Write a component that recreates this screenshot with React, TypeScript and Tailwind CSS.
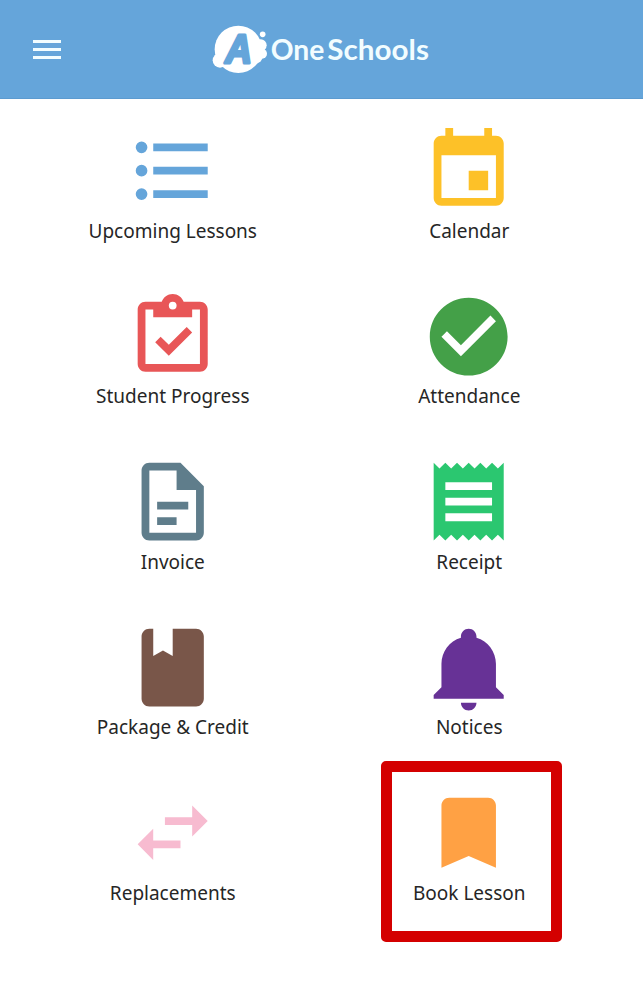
const menuItems = [
  {
    label: 'Upcoming Lessons',
    color: 'text-[#65a5da]',
    path: 'M4 4.5a1.5 1.5 0 1 0 0 3 1.5 1.5 0 0 0 0-3zm0 6a1.5 1.5 0 1 0 0 3 1.5 1.5 0 0 0 0-3zm0 6a1.5 1.5 0 1 0 0 3 1.5 1.5 0 0 0 0-3zM7 5h14v2H7zm0 6h14v2H7zm0 6h14v2H7z'
  },
  {
    label: 'Calendar',
    color: 'text-[#fdc128]',
    path: 'M17 12h-5v5h5v-5zM16 1v2H8V1H6v2H5c-1.1 0-2 .9-2 2v14c0 1.1.9 2 2 2h14c1.1 0 2-.9 2-2V5c0-1.1-.9-2-2-2h-1V1h-2zm3 18H5V8h14v11z'
  },
  {
    label: 'Student Progress',
    color: 'text-[#e85657]',
    path: 'M19 3h-4.18C14.4 1.84 13.3 1 12 1s-2.4.84-2.82 2H5c-1.1 0-2 .9-2 2v14c0 1.1.9 2 2 2h14c1.1 0 2-.9 2-2V5c0-1.1-.9-2-2-2zm-7 0a1 1 0 1 1 0 2 1 1 0 0 1 0-2zm7 16H5V5h2v2h10V5h2v14zM11 16.9l-3.5-3.5L8.9 12l2.1 2.1 4.6-4.6 1.4 1.4z'
  },
  {
    label: 'Attendance',
    color: 'text-[#44a048]',
    path: 'M12 2C6.48 2 2 6.48 2 12s4.48 10 10 10 10-4.48 10-10S17.52 2 12 2zm-2 15l-5-5 1.41-1.41L10 14.17l7.59-7.59L19 8l-9 9z'
  },
  {
    label: 'Invoice',
    color: 'text-[#5f7d8b]',
    path: 'M14 2H6c-1.1 0-2 .9-2 2v16c0 1.1.9 2 2 2h12c1.1 0 2-.9 2-2V8l-6-6zm4 18H6V4h7v5h5v11zM8 12h8v2H8zm0 4h5v2H8z'
  },
  {
    label: 'Receipt',
    color: 'text-[#2bc770]',
    path: 'M18 17H6v-2h12v2zm0-4H6v-2h12v2zm0-4H6V7h12v2zM3 22l1.5-1.5L6 22l1.5-1.5L9 22l1.5-1.5L12 22l1.5-1.5L15 22l1.5-1.5L18 22l1.5-1.5L21 22V2l-1.5 1.5L18 2l-1.5 1.5L15 2l-1.5 1.5L12 2l-1.5 1.5L9 2 7.5 3.5 6 2 4.5 3.5 3 2v20z'
  },
  {
    label: 'Package & Credit',
    color: 'text-[#795649]',
    path: 'M18 2h-6v7L9.5 7.55 7 9V2H6c-1.1 0-2 .9-2 2v16c0 1.1.9 2 2 2h12c1.1 0 2-.9 2-2V4c0-1.1-.9-2-2-2z'
  },
  {
    label: 'Notices',
    color: 'text-[#673296]',
    path: 'M21 19v1H3v-1l2-2v-6c0-3.1 2.03-5.83 5-6.71V4c0-1.1.9-2 2-2s2 .9 2 2v.29c2.97.88 5 3.61 5 6.71v6l2 2zm-7 2c0 1.1-.9 2-2 2s-2-.9-2-2h4z'
  },
  {
    label: 'Replacements',
    color: 'text-[#f7bbd0]',
    path: 'M6.99 11L3 15l3.99 4v-3H14v-2H6.99v-3zM21 9l-3.99-4v3H10v2h7.01v3L21 9z'
  },
  {
    label: 'Book Lesson',
    color: 'text-[#ffa144]',
    path: 'M17 3H7c-1.1 0-2 .9-2 2v16l7-3 7 3V5c0-1.1-.9-2-2-2z',
    highlighted: true
  }
];

const Logo = () => (
  <svg viewBox="0 0 720 210" className="w-[240px] h-[70px]" aria-label="Ai OneSchools">
    {/* Cloud badge */}
    <g className="fill-white">
      <circle cx="115" cy="103" r="71" />
      <circle cx="60" cy="136" r="22" />
      <circle cx="182" cy="91" r="18" />
      <circle cx="186" cy="116" r="15" />
      <circle cx="166" cy="124" r="22" />
      <circle cx="188" cy="58" r="8.5" />
    </g>
    <text
      x="76"
      y="144"
      textLength="80"
      lengthAdjust="spacingAndGlyphs"
      strokeWidth="9"
      strokeLinejoin="round"
      className="font-['Liberation_Sans'] font-bold italic text-[122px] fill-[#65a5da] stroke-[#65a5da]"
    >
      A
    </text>
    {/* Wordmark */}
    <g className="font-['Lato'] font-bold text-[85px] fill-[#f2fdff]">
      <text x="212" y="136" textLength="161" lengthAdjust="spacingAndGlyphs">One</text>
      <text x="382" y="136" textLength="305" lengthAdjust="spacingAndGlyphs">Schools</text>
    </g>
  </svg>
);

const Header = () => (
  <header className="h-[99px] bg-[#65a5da] border-b border-[#5c9bd0] flex items-center justify-center relative pr-[3px] pt-[2px]">
    <button className="absolute left-[33px] top-10 flex flex-col gap-[5px]" aria-label="Menu">
      <span className="w-7 h-[3px] bg-[#f2fdff]" />
      <span className="w-7 h-[3px] bg-[#f2fdff]" />
      <span className="w-7 h-[3px] bg-[#f2fdff]" />
    </button>
    <Logo />
  </header>
);

const App = () => {
  return (
    <div className="w-full h-[988px] bg-white overflow-hidden font-['Noto_Sans',sans-serif]">
      <Header />
      <main className="grid grid-cols-2 auto-rows-[165.5px] px-[25px] pt-[25.2px]">
        {menuItems.map((item) => (
          <div key={item.label} className="flex flex-col items-center relative">
            <svg viewBox="0 0 24 24" className={`w-[93.4px] h-[93.4px] shrink-0 mr-[1.5px] ${item.color}`}>
              <path d={item.path} fill="currentColor" fillRule="evenodd" />
            </svg>
            <span className="-mt-px mr-px text-[19px] leading-7 text-[#262626] whitespace-nowrap">
              {item.label}
            </span>
            {item.highlighted && (
              <div className="absolute -top-[25px] left-[59px] w-[181px] h-[181px] border-[11px] border-[#d40000] rounded-[5px]" />
            )}
          </div>
        ))}
      </main>
    </div>
  );
};

export default App;
